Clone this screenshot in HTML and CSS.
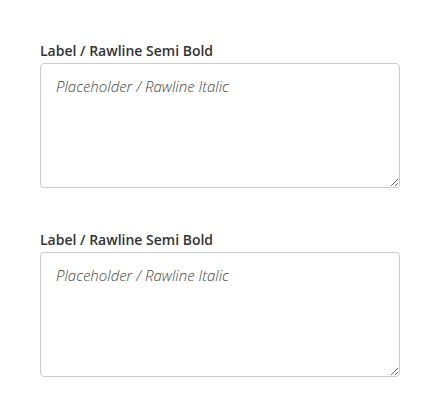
FILE: index.html
```html
<!DOCTYPE html>
<html lang="en">
<head>
    <meta charset="UTF-8">
    <meta name="viewport" content="width=device-width, initial-scale=1.0">
    <title>Textarea</title>
    <link rel="stylesheet" href="styles.css">
</head>
<body>
    <div class="form">
        <div class="field">
            <label class="label" for="first">Label / Rawline Semi Bold</label>
            <textarea id="first" class="input" placeholder="Placeholder / Rawline Italic"></textarea>
        </div>
        <div class="field">
            <label class="label" for="second">Label / Rawline Semi Bold</label>
            <textarea id="second" class="input" placeholder="Placeholder / Rawline Italic"></textarea>
        </div>
    </div>
</body>
</html>
```

FILE: styles.css
```css
body {
    margin: 0;
    font-family: "Open Sans", sans-serif;
    background: #fff;
}

.form {
    display: flex;
    flex-direction: column;
    gap: 42px;
    padding: 41px 40px;
}

.field {
    display: flex;
    flex-direction: column;
    gap: 2px;
}

.label {
    font-size: 14px;
    font-weight: 600;
    line-height: 20px;
    color: #333;
}

.input {
    box-sizing: border-box;
    width: 360px;
    height: 125px;
    margin: 0;
    padding: 12px 15px;
    border: 1px solid #ccc;
    border-radius: 4px;
    font-family: "Open Sans", sans-serif;
    font-size: 15px;
    line-height: 20px;
    color: #333;
}

.input::placeholder {
    font-style: italic;
    font-weight: 300;
    color: #444;
}
```
